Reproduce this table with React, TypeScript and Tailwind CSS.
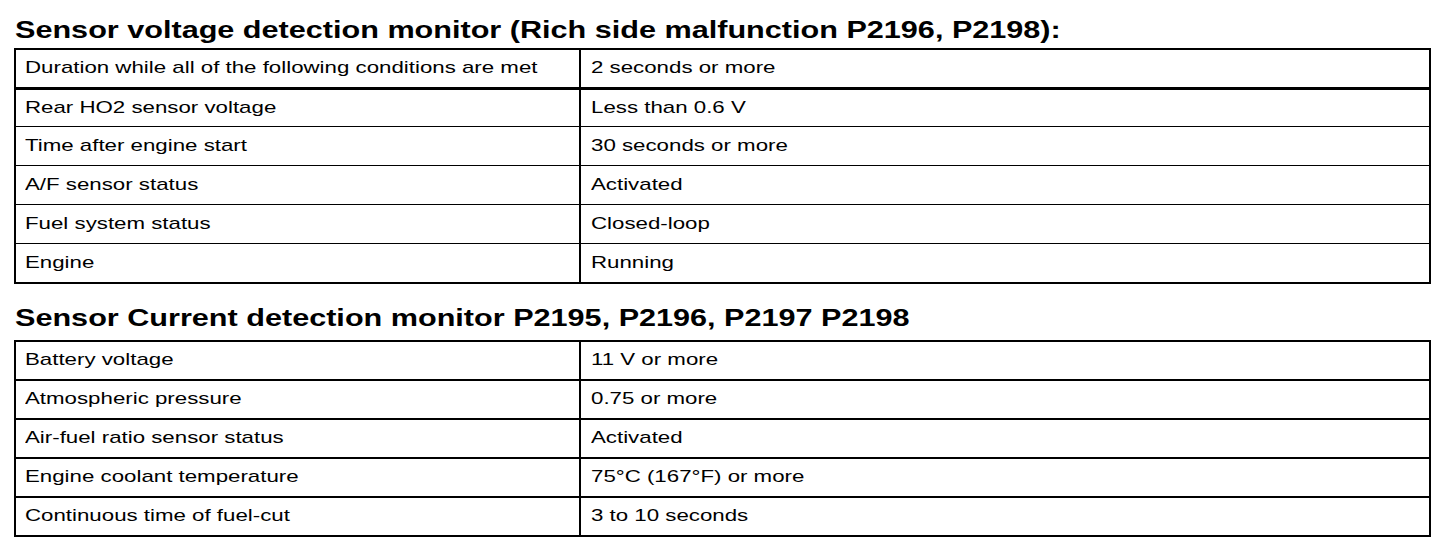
import React from 'react';

type Row = [string, string];

const voltageRows: Row[] = [
    ['Duration while all of the following conditions are met', '2 seconds or more'],
    ['Rear HO2 sensor voltage', 'Less than 0.6 V'],
    ['Time after engine start', '30 seconds or more'],
    ['A/F sensor status', 'Activated'],
    ['Fuel system status', 'Closed-loop'],
    ['Engine', 'Running'],
];

const currentRows: Row[] = [
    ['Battery voltage', '11 V or more'],
    ['Atmospheric pressure', '0.75 or more'],
    ['Air-fuel ratio sensor status', 'Activated'],
    ['Engine coolant temperature', '75°C (167°F) or more'],
    ['Continuous time of fuel-cut', '3 to 10 seconds'],
];

// text in the source is rendered wide, so stretch it horizontally
const WideTitle = ({ children }: { children: React.ReactNode }) => (
    <span className="inline-block origin-left scale-x-[1.275] whitespace-nowrap">{children}</span>
);

const WideCell = ({ children }: { children: React.ReactNode }) => (
    <span className="inline-block origin-left scale-x-[1.31] whitespace-nowrap">{children}</span>
);

const Title = ({ children, className }: { children: React.ReactNode; className: string }) => (
    <div className={`text-[24px] leading-[24px] font-bold text-black pl-[1px] ${className}`}>
        <WideTitle>{children}</WideTitle>
    </div>
);

const ConditionTable = ({ rows, thin }: { rows: Row[]; thin: boolean }) => (
    <div className="w-[1417px] border-2 border-black">
        {rows.map(([label, value], i) => {
            let line = '';
            if (i === 1 && thin) line = 'border-t-[3px] h-[39px]';
            else if (i > 0) line = thin ? 'border-t h-[39px]' : 'border-t-2 h-[39px]';
            else line = 'h-[37px]';
            return (
                <div key={label} className={`flex border-black ${line}`}>
                    <div className="w-[563px] shrink-0 flex items-center pl-[9px] pb-[2px] text-[17px] leading-[17px]">
                        <WideCell>{label}</WideCell>
                    </div>
                    <div className="flex-1 flex items-center border-l-2 border-black pl-[10px] pb-[2px] text-[17px] leading-[17px]">
                        <WideCell>{value}</WideCell>
                    </div>
                </div>
            );
        })}
    </div>
);

export default function App() {
    return (
        <div className="w-[1456px] h-[550px] bg-white text-black pl-[14px] font-['Liberation_Sans',Arial,sans-serif] overflow-hidden">
            <Title className="pt-[18px] mb-[6px]">
                Sensor voltage detection monitor (Rich side malfunction P2196, P2198):
            </Title>
            <ConditionTable rows={voltageRows} thin />

            <Title className="mt-[22px] mb-[10px]">
                Sensor Current detection monitor P2195, P2196, P2197 P2198
            </Title>
            <ConditionTable rows={currentRows} thin={false} />
        </div>
    );
}
